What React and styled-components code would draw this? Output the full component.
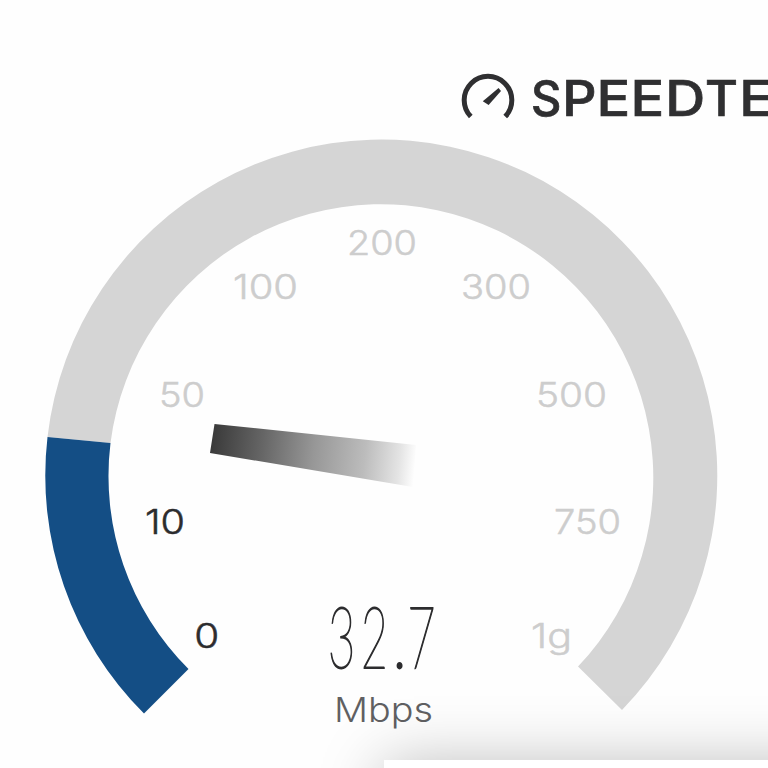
import React from 'react'

import styled, { createGlobalStyle } from 'styled-components';

const GlobalStyle = createGlobalStyle`
    body {
        margin: 0;
        background: #fefefe;
        overflow: hidden;
    }
`

const Viewport = styled.div`
    position: relative;
    width: 768px;
    height: 768px;
    overflow: hidden;
`

const Page = styled.main`
    display: flex;
    flex-direction: column;
    width: 768px;
    height: 768px;
    overflow: hidden;
    background: #fefefe;
    font-family: Inter, "Open Sans", sans-serif;
`

const Header = styled.header`
    display: flex;
    flex: none;
    align-items: flex-start;
    height: 132px;
    padding-left: 460px;
    box-sizing: border-box;
    overflow: hidden;
`

const Logo = styled.svg`
    flex: none;
    width: 308px;
    height: 132px;
    fill: #2f2f31;
`

const Brand = styled.text`
    font-size: 49px;
    font-weight: 500;
    stroke: #2f2f31;
    stroke-width: 0.7px;
`

const Dial = styled.svg`
    flex: none;
    width: 768px;
    height: 636px;
`

const Band = styled.path`
    fill: ${props => props.$active ? '#144e85' : '#d5d5d5'};
`

const Tick = styled.text`
    font-size: 34.2px;
    font-weight: 300;
    fill: ${props => props.$active ? '#2c2c2e' : '#cdcdcd'};
    stroke: ${props => props.$active ? '#2c2c2e' : '#cdcdcd'};
    stroke-width: 0.5px;
`

const Speed = styled.text`
    font-family: Lato, sans-serif;
    font-size: 87px;
    font-weight: 100;
    fill: #2c2c2e;
    stroke: #2c2c2e;
    stroke-width: 1.8px;
`

const Unit = styled.text`
    font-size: 33.5px;
    font-weight: 300;
    fill: #606062;
`

const Panel = styled.aside`
    position: absolute;
    left: 384px;
    top: 760px;
    width: 700px;
    height: 300px;
    background: #fff;
    box-shadow: 0 4px 60px rgba(0, 0, 0, 0.27);
`

const letters = [
    { label: 'S', x: 531, scale: 0.96 },
    { label: 'P', x: 562.3, scale: 1.09 },
    { label: 'E', x: 596.4, scale: 1.14 },
    { label: 'E', x: 630.4, scale: 1.14 },
    { label: 'D', x: 665.3, scale: 1.13 },
    { label: 'T', x: 705, scale: 1.03 },
    { label: 'E', x: 739.2, scale: 1.14 },
]

const ticks = [
    { label: '0', x: 194.2, y: 648.3, width: 25 },
    { label: '10', x: 145, y: 534.3, width: 40 },
    { label: '50', x: 159, y: 407.1, width: 46 },
    { label: '100', x: 233, y: 299.4, width: 65 },
    { label: '200', x: 347, y: 255.2, width: 70 },
    { label: '300', x: 461, y: 299.4, width: 70 },
    { label: '500', x: 536, y: 407.1, width: 71 },
    { label: '750', x: 554, y: 534.3, width: 67 },
    { label: '1g', x: 531, y: 648.3, width: 41 },
]

const reached = ['0', '10']

const digits = [
    { label: '3', x: 328, scale: 0.54 },
    { label: '2', x: 361, scale: 0.53 },
    { label: '.', x: 391.5, scale: 0.8 },
    { label: '7', x: 407.3, scale: 0.56 },
]

export default function App() {
    return (
        <Viewport>
            <GlobalStyle />
            <Page>
                <Header>
                    <Logo viewBox="460 0 308 132">
                        <path d="M470.8 116.6A23.8 23.8 0 1 1 505.2 116.6" fill="none" stroke="#2f2f31" strokeWidth="5" />
                        <path d="M498.6 88L501 91L488.6 105L482.8 101.2Z" />
                        {letters.map((letter, i) => (
                            <Brand key={i} transform={`translate(${letter.x} 116) scale(${letter.scale} 1)`}>
                                {letter.label}
                            </Brand>
                        ))}
                    </Logo>
                </Header>
                <Dial viewBox="0 132 768 636">
                    <defs>
                        <linearGradient id="needle" gradientUnits="userSpaceOnUse" x1="212" y1="438" x2="416" y2="460">
                            <stop offset="0" stopColor="#3a3a3a" />
                            <stop offset="0.25" stopColor="#666" />
                            <stop offset="0.5" stopColor="#979797" />
                            <stop offset="0.75" stopColor="#bcbcbc" />
                            <stop offset="0.92" stopColor="#e4e4e4" />
                            <stop offset="1" stopColor="#fefefe" />
                        </linearGradient>
                    </defs>
                    <Band d="M47.5 437A336 336 0 1 1 622 710L578 666.5A272.5 273.5 0 1 0 110.5 443Z" />
                    <Band $active d="M47.5 437A336 336 0 0 0 144 713.5L188.5 669A272.5 272.5 0 0 1 110.5 443Z" />
                    {ticks.map(tick => (
                        <Tick
                            key={tick.label}
                            $active={reached.includes(tick.label)}
                            x={tick.x}
                            y={tick.y}
                            textLength={tick.width}
                            lengthAdjust="spacingAndGlyphs"
                        >
                            {tick.label}
                        </Tick>
                    ))}
                    <path d="M214.5 424L416 445L413 487L210 453Z" fill="url(#needle)" />
                    {digits.map(digit => (
                        <Speed key={digit.label} transform={`translate(${digit.x} 667.5) scale(${digit.scale} 1)`}>
                            {digit.label}
                        </Speed>
                    ))}
                    <Unit x="334" y="722.3" textLength="99" lengthAdjust="spacingAndGlyphs">Mbps</Unit>
                </Dial>
            </Page>
            <Panel />
        </Viewport>
    )
}
